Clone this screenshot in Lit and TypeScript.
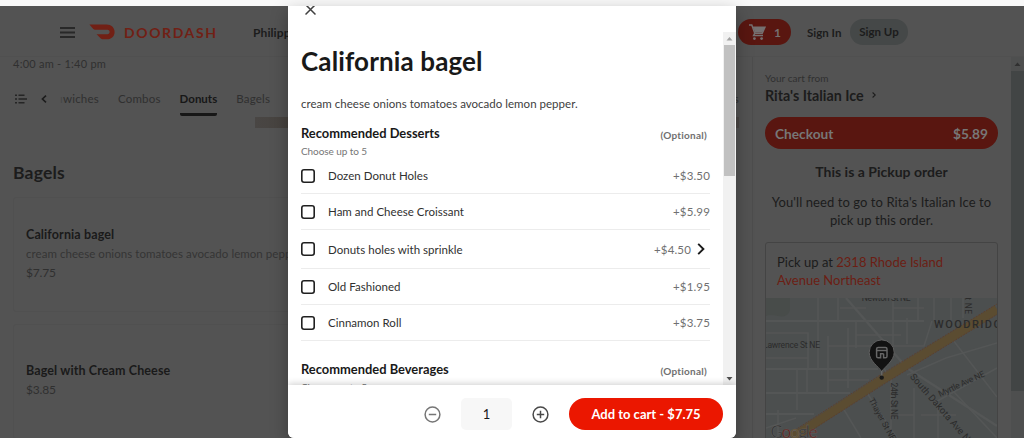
import { LitElement, html, svg, css } from "lit";
import { customElement, property } from "lit/decorators.js";

interface Option {
  name: string;
  price: string;
  nested?: boolean;
}

const desserts: Option[] = [
  { name: "Dozen Donut Holes", price: "+$3.50" },
  { name: "Ham and Cheese Croissant", price: "+$5.99" },
  { name: "Donuts holes with sprinkle", price: "+$4.50", nested: true },
  { name: "Old Fashioned", price: "+$1.95" },
  { name: "Cinnamon Roll", price: "+$3.75" },
];

@customElement("store-header")
export class StoreHeader extends LitElement {
  static styles = css`
    :host {
      display: flex;
      align-items: center;
      box-sizing: border-box;
      height: 51px;
      padding: 2px 0 0 60px;
      border-bottom: 1px solid #505050;
      color: #1c1c1c;
      font-size: 12px;
      font-weight: 700;
    }

    .menu {
      width: 15px;
      height: 11px;
      margin-right: 14px;
    }

    .logo {
      width: 27px;
      height: 16px;
      margin-right: 8px;
    }

    .brand {
      width: 129px;
      color: #712015;
      font-size: 14px;
      letter-spacing: 1.6px;
    }

    .address {
      flex: 1;
      letter-spacing: 0.1px;
    }

    .cart {
      display: flex;
      align-items: center;
      justify-content: space-between;
      box-sizing: border-box;
      width: 53px;
      height: 26px;
      padding: 0 10px 0 11px;
      margin-right: 16px;
      border-radius: 13px;
      background: #591610;
      color: #757070;
    }

    .sign-in {
      width: 43px;
      font-size: 11.5px;
    }

    .sign-up {
      width: 58px;
      height: 26px;
      margin-right: 116px;
      border-radius: 13px;
      background: #454848;
      font-size: 11.5px;
      line-height: 26px;
      text-align: center;
    }
  `;

  render() {
    return html`
      <svg class="menu" viewBox="0 0 15 11" stroke="#282828" stroke-width="1.8">
        <path d="M0 1h15M0 5.5h15M0 10h15" />
      </svg>
      <svg class="logo" viewBox="0 0 27 16" fill="#712015">
        <path
          d="M0.4 0.6H17.5C22.2 0.6 25.6 3.8 25.6 7.9C25.6 12.1 22.5 15.2 18 15.2H13.5Q12.5 15.2 11.8 14.5L7.6 10.3H18.4C19.8 10.3 20.6 9.2 20.6 8C20.6 6.8 19.8 5.8 18.4 5.8H6Q5 5.8 4.3 5.1Z"
        />
      </svg>
      <span class="brand">DOORDASH</span>
      <span class="address">Philipp</span>
      <div class="cart">
        <svg width="17" height="17" viewBox="0 0 17 17">
          <path
            d="M0 1h2.8l3 8.2h7.4L16 3.2H4.2M5.8 9.2L4.6 11.6H14"
            fill="none"
            stroke="#757070"
            stroke-width="1.5"
          />
          <path d="M4 3.2H16L13.2 8.6H6Z" fill="#757070" />
          <circle cx="5.4" cy="14.6" r="1.4" fill="#757070" />
          <circle cx="12.6" cy="14.6" r="1.4" fill="#757070" />
        </svg>
        <span>1</span>
      </div>
      <span class="sign-in">Sign In</span>
      <span class="sign-up">Sign Up</span>
    `;
  }
}

@customElement("store-menu")
export class StoreMenu extends LitElement {
  static styles = css`
    :host {
      display: block;
      box-sizing: border-box;
      width: 752px;
      padding-left: 13px;
      overflow: hidden;
      color: #303030;
      font-size: 12px;
      white-space: nowrap;
    }

    .hours {
      height: 13px;
      line-height: 13px;
      font-size: 11px;
      letter-spacing: 0.25px;
    }

    .tabs {
      display: flex;
      align-items: center;
      height: 35px;
      margin-top: 11px;
      padding-left: 2px;
      font-size: 11.5px;
    }

    .back {
      margin: 0 13px 0 14px;
    }

    .tab {
      box-sizing: border-box;
      height: 35px;
      line-height: 35px;
      margin-right: 19px;
      letter-spacing: 0.2px;
    }

    .cut {
      color: #474747;
    }

    .active {
      border-bottom: 3px solid #171717;
      border-radius: 2px;
      color: #171717;
      font-weight: 700;
      letter-spacing: 0;
    }

    .last {
      margin-left: auto;
      margin-right: 13px;
    }

    .photo {
      width: 484px;
      height: 11px;
      margin: 1px 0 0 242px;
      background: linear-gradient(90deg, #494644, #47433f 32px, #4b4745);
    }

    h2 {
      margin: 33px 0 12px;
      color: #1c1c1c;
      font-size: 17.5px;
      line-height: 24px;
      letter-spacing: 0.2px;
    }

    .item {
      box-sizing: border-box;
      width: 715px;
      height: 115px;
      margin-bottom: 12px;
      padding: 27px 0 0 12px;
      border: 1px solid #505050;
      border-radius: 3px;
      line-height: 19px;
    }

    .name {
      color: #1a1a1a;
      font-size: 12.5px;
      font-weight: 700;
      letter-spacing: 0.12px;
    }

    .about {
      color: #353535;
      font-size: 11.5px;
      letter-spacing: 0.05px;
    }

    .cost {
      letter-spacing: -0.2px;
    }

    .second {
      padding-top: 36px;
    }
  `;

  render() {
    return html`
      <div class="hours">4:00 am - 1:40 pm</div>
      <div class="tabs">
        <svg width="12" height="10" viewBox="0 0 12 10" stroke="#252525" stroke-width="1.4">
          <path d="M0 1.2h2M0 5h2M0 8.8h2M3.5 1.2h6M3.5 5h8.5M3.5 8.8h6" />
        </svg>
        <svg class="back" width="6" height="8" viewBox="0 0 6 8" fill="none" stroke="#1c1c1c" stroke-width="1.6">
          <path d="M5 0.6L1.4 4L5 7.4" />
        </svg>
        <span class="tab"><span class="cut">ı</span>wiches</span>
        <span class="tab">Combos</span>
        <span class="tab active">Donuts</span>
        <span class="tab">Bagels</span>
        <span class="tab last">Drinks</span>
      </div>
      <div class="photo"></div>
      <h2>Bagels</h2>
      <div class="item">
        <div class="name">California bagel</div>
        <div class="about">cream cheese onions tomatoes avocado lemon pepper.</div>
        <div class="cost">$7.75</div>
      </div>
      <div class="item second">
        <div class="name">Bagel with Cream Cheese</div>
        <div class="cost">$3.85</div>
      </div>
    `;
  }
}

@customElement("pickup-map")
export class PickupMap extends LitElement {
  static styles = css`
    :host {
      display: block;
      height: 140px;
      background: #4c4f4f;
    }

    svg {
      display: block;
    }

    text {
      fill: #2b2b2b;
      font-family: Roboto, sans-serif;
      font-size: 8.5px;
    }

    .area {
      font-size: 11px;
      font-weight: 500;
    }

    .main-road {
      font-size: 9.5px;
    }

    .google {
      font-family: Lato, sans-serif;
      font-size: 17px;
      fill: #343434;
      stroke: #666;
      stroke-width: 0.4;
    }

    .red {
      fill: #632019;
    }

    .orange {
      fill: #66502b;
    }
  `;

  pin() {
    return svg`
      <path d="M115.7 73.5C113 69 103.2 63 103.2 54.4A12.5 12.5 0 0 1 128.2 54.4C128.2 63 118.4 69 115.7 73.5Z"
        fill="#121212" stroke="#606060" stroke-width="1" />
      <path d="M115.7 73v5" stroke="#666" stroke-width="1.4" />
      <circle cx="115.7" cy="79.6" r="2.2" fill="#191919" />
      <path d="M110.6 52.6V51Q110.6 49.4 112.2 49.4H119.4Q121 49.4 121 51V58.2Q121 59.8 119.4 59.8H117.6V55.8M110.6 52.6H121M110.6 52.6V58.2Q110.6 59.8 112.2 59.8H114.6V55.8H117.6"
        fill="none" stroke="#666" stroke-width="1.5" />
    `;
  }

  render() {
    return html`
      <svg width="231" height="140" viewBox="0 0 231 140">
        <path d="M0 0H24V12Q22 20 12 18Q4 16 0 18Z" fill="#484c4a" />
        <g fill="none" stroke="#545656" stroke-width="1.6">
          <path d="M0 23H158M0 71H112M0 95H84M0 116H48" stroke-width="2.2" />
          <path d="M52 0V71M62 38V95M72 0V23M90 23V50M31 71V112M41 72V95M82 30V90M127 0V50M152 0V23M141 20V46" />
          <path d="M0 35H42V71M0 60H42M62 48H112M90 37H135M74 10H100M127 10H158M62 82H103M118 48H158L166 23" />
          <path d="M80 0L141 70L231 128" stroke-width="2.4" />
          <path d="M116 68L125 80V140M101 95L131 140M77 110L95 140M148 90V140M172 104V140M155 117H190M126 117H148" />
          <path d="M141 77L180 60L231 45M187 42L231 99M166 106L231 70M188 94L231 140M168 0V22M185 0V25M197 0V20M0 130L30 120M12 112V140" />
        </g>
        <path d="M25.7 140L118 80.5L231 11.3" fill="none" stroke="#5b4c31" stroke-width="8.6" />
        <path d="M19 138.5L116 75.8L231 6" fill="none" stroke="#623b22" stroke-width="0.7" stroke-dasharray="2 1" />
        <path d="M32 141L120 84.8L231 16.5" fill="none" stroke="#623b22" stroke-width="0.7" stroke-dasharray="2 1" />
        <text x="95.7" y="3.3" textLength="49">Newton St NE</text>
        <text transform="translate(199 0) rotate(90)" x="-3" textLength="19">lt NE</text>
        <text class="area" x="168" y="29.8" textLength="67">WOODRIDG</text>
        <text x="-3" y="50" textLength="57">Lawrence St NE</text>
        <text transform="translate(124.6 84.5) rotate(90)" textLength="37">24th St NE</text>
        <text transform="translate(102.5 102) rotate(61)" textLength="47">Thayer St NE</text>
        <text class="main-road" transform="translate(143.5 79) rotate(49)" textLength="92">South Dakota Ave NE</text>
        <text transform="translate(174 99) rotate(-25)" textLength="50">Myrtle Ave NE</text>
        <text class="google" x="4.5" y="139.5" textLength="47">G<tspan class="red">o</tspan><tspan class="orange">o</tspan>gl<tspan class="red">e</tspan></text>
        ${this.pin()}
      </svg>
    `;
  }
}

@customElement("cart-panel")
export class CartPanel extends LitElement {
  static styles = css`
    :host {
      display: block;
      box-sizing: border-box;
      width: 259px;
      padding: 14px 13px 0 12px;
      border-left: 1px solid #4d4d4d;
      color: #1c1c1c;
      font-size: 14px;
    }

    .from {
      color: #303030;
      font-size: 10px;
      line-height: 14px;
      letter-spacing: 0.05px;
    }

    .store {
      display: flex;
      align-items: center;
      gap: 8px;
      height: 20px;
      font-size: 14.3px;
      font-weight: 700;
    }

    .checkout {
      display: flex;
      align-items: center;
      justify-content: space-between;
      height: 32px;
      margin-top: 12px;
      padding: 0 10px;
      border-radius: 16px;
      background: #591610;
      color: #777;
      font-size: 13.7px;
      font-weight: 700;
    }

    .title {
      margin-top: 14px;
      font-weight: 700;
      line-height: 18px;
      text-align: center;
    }

    .note {
      margin: 12px 0 13px;
      font-size: 13px;
      line-height: 18px;
      text-align: center;
      letter-spacing: 0.08px;
    }

    .place {
      border: 1px solid #444;
      border-radius: 3px 3px 0 0;
    }

    .where {
      height: 46px;
      padding: 10px 10px 0 11px;
      box-sizing: content-box;
      height: 45px;
      font-size: 13px;
      line-height: 18px;
    }

    .link {
      color: #6b1e14;
    }
  `;

  render() {
    return html`
      <div class="from">Your cart from</div>
      <div class="store">
        <span>Rita's Italian Ice</span>
        <svg width="4" height="6" viewBox="0 0 4 6" fill="none" stroke="#1c1c1c" stroke-width="1.1">
          <path d="M0.6 0.5L3.3 3L0.6 5.5" />
        </svg>
      </div>
      <div class="checkout"><span>Checkout</span><span>$5.89</span></div>
      <div class="title">This is a Pickup order</div>
      <div class="note">You'll need to go to Rita's Italian Ice to<br />pick up this order.</div>
      <div class="place">
        <div class="where">
          Pick up at <span class="link">2318 Rhode Island<br />Avenue Northeast</span>
        </div>
        <pickup-map></pickup-map>
      </div>
    `;
  }
}

@customElement("option-group")
export class OptionGroup extends LitElement {
  @property() heading = "";
  @property({ attribute: false }) options: Option[] = [];

  static styles = css`
    :host {
      display: block;
      width: 409px;
    }

    .head {
      display: flex;
      align-items: center;
      justify-content: space-between;
      height: 18px;
      padding-right: 3px;
    }

    h3 {
      margin: 0;
      font-size: 12.9px;
      line-height: 18px;
    }

    .optional {
      padding-top: 3px;
      color: #707070;
      font-size: 10px;
      font-weight: 700;
      letter-spacing: 0.25px;
    }

    .hint {
      margin-top: 2px;
      color: #767676;
      font-size: 10px;
      line-height: 14px;
      letter-spacing: -0.08px;
    }

    .row {
      display: flex;
      align-items: center;
      box-sizing: border-box;
      height: 36px;
      border-bottom: 1px solid #ececec;
      color: #303030;
      font-size: 11.5px;
      letter-spacing: 0.02px;
    }

    .row.nested {
      height: 39px;
    }

    .box {
      box-sizing: border-box;
      width: 14px;
      height: 14px;
      margin-right: 13px;
      border-radius: 3px;
      box-shadow: inset 0 0 0 1.6px #202020;
    }

    .price {
      margin-left: auto;
      color: #707070;
      letter-spacing: 0.15px;
    }

    .arrow {
      margin: 0 5px 0 6px;
    }
  `;

  render() {
    return html`
      <div class="head">
        <h3>${this.heading}</h3>
        <span class="optional">(Optional)</span>
      </div>
      <div class="hint">Choose up to 5</div>
      ${this.options.map(
        (option) => html`
          <div class="row ${option.nested ? "nested" : ""}">
            <span class="box"></span>
            <span>${option.name}</span>
            <span class="price">${option.price}</span>
            ${option.nested
              ? html`<svg class="arrow" width="8" height="12" viewBox="0 0 8 12" fill="none" stroke="#191919" stroke-width="1.9">
                  <path d="M1.2 0.9L6.4 6L1.2 11.1" />
                </svg>`
              : null}
          </div>
        `
      )}
    `;
  }
}

@customElement("item-modal")
export class ItemModal extends LitElement {
  static styles = css`
    :host {
      display: flex;
      flex-direction: column;
      overflow: hidden;
      border-radius: 0 0 6px 6px;
      background: #fff;
      color: #191919;
      box-shadow: 0 6px 18px rgba(0, 0, 0, 0.3);
    }

    .top {
      height: 26px;
      padding-left: 17px;
    }

    .close {
      display: block;
      margin-top: -3px;
    }

    .scroll {
      display: flex;
      height: 353px;
      overflow: hidden;
    }

    .content {
      flex: 1;
      padding-left: 13px;
    }

    h1 {
      margin: 13px 0 0;
      font-size: 26px;
      line-height: 32px;
      letter-spacing: 0.13px;
    }

    .about {
      margin: 18px 0 11px;
      color: #404040;
      font-size: 11.5px;
      line-height: 18px;
      letter-spacing: 0.02px;
    }

    option-group {
      margin-bottom: 19px;
    }

    .bar {
      display: flex;
      flex-direction: column;
      align-items: center;
      width: 13px;
      background: #f1f1f1;
    }

    .thumb {
      flex: 1;
      width: 11px;
      margin-bottom: 196px;
      background: #c1c1c1;
    }

    .footer {
      display: flex;
      align-items: center;
      justify-content: flex-end;
      box-sizing: border-box;
      position: relative;
      height: 53px;
      padding: 5px 13px 0 0;
      background: #fff;
      box-shadow: 0 -1px 7px rgba(0, 0, 0, 0.2);
    }

    .count {
      width: 51px;
      height: 32px;
      margin: 0 20px;
      border-radius: 5px;
      background: #f7f7f7;
      font-size: 13px;
      line-height: 32px;
      text-align: center;
    }

    .add {
      width: 154px;
      height: 32px;
      margin-left: 20px;
      border-radius: 16px;
      background: #eb1700;
      color: #fff;
      font-size: 13px;
      font-weight: 700;
      line-height: 32px;
      text-align: center;
    }
  `;

  render() {
    return html`
      <div class="top">
        <svg class="close" width="11" height="13" viewBox="0 0 11 13" stroke="#404040" stroke-width="1.5">
          <path d="M0.5 1.5L10.5 11.5M10.5 1.5L0.5 11.5" />
        </svg>
      </div>
      <div class="scroll">
        <div class="content">
          <h1>California bagel</h1>
          <div class="about">cream cheese onions tomatoes avocado lemon pepper.</div>
          <option-group heading="Recommended Desserts" .options=${desserts}></option-group>
          <option-group heading="Recommended Beverages"></option-group>
        </div>
        <div class="bar">
          <svg width="13" height="13" viewBox="0 0 13 13" fill="#a3a3a3"><path d="M3.5 8.5h6L6.5 5Z" /></svg>
          <div class="thumb"></div>
          <svg width="13" height="13" viewBox="0 0 13 13" fill="#505050"><path d="M3.5 5h6L6.5 8.5Z" /></svg>
        </div>
      </div>
      <div class="footer">
        <svg width="17" height="17" viewBox="0 0 17 17" fill="none" stroke="#767676" stroke-width="1.5">
          <circle cx="8.5" cy="8.5" r="7.4" />
          <path d="M4.8 8.5h7.4" />
        </svg>
        <span class="count">1</span>
        <svg width="17" height="17" viewBox="0 0 17 17" fill="none" stroke="#494949" stroke-width="1.5">
          <circle cx="8.5" cy="8.5" r="7.4" />
          <path d="M4.8 8.5h7.4M8.5 4.8v7.4" />
        </svg>
        <span class="add">Add to cart - $7.75</span>
      </div>
    `;
  }
}

@customElement("app-root")
export class AppRoot extends LitElement {
  static styles = css`
    :host {
      display: block;
      position: relative;
      box-sizing: border-box;
      width: 1024px;
      height: 438px;
      padding-top: 6px;
      overflow: hidden;
      background: #f9f9f9;
      font-family: Lato, "Liberation Sans", sans-serif;
    }

    .page {
      height: 432px;
      overflow: hidden;
      background: #535353;
    }

    .body {
      display: flex;
      height: 381px;
    }

    .bar {
      width: 13px;
      background: #4e4f4f;
    }

    .bar svg {
      display: block;
    }

    .thumb {
      height: 320px;
      background: #424545;
    }

    item-modal {
      position: absolute;
      left: 288px;
      top: 6px;
      width: 448px;
      height: 432px;
    }
  `;

  render() {
    return html`
      <div class="page">
        <store-header></store-header>
        <div class="body">
          <store-menu></store-menu>
          <cart-panel></cart-panel>
          <div class="bar">
            <svg width="13" height="14" viewBox="0 0 13 14" fill="#303030"><path d="M3.5 9h6L6.5 5.5Z" /></svg>
            <div class="thumb"></div>
          </div>
        </div>
      </div>
      <item-modal></item-modal>
    `;
  }
}
